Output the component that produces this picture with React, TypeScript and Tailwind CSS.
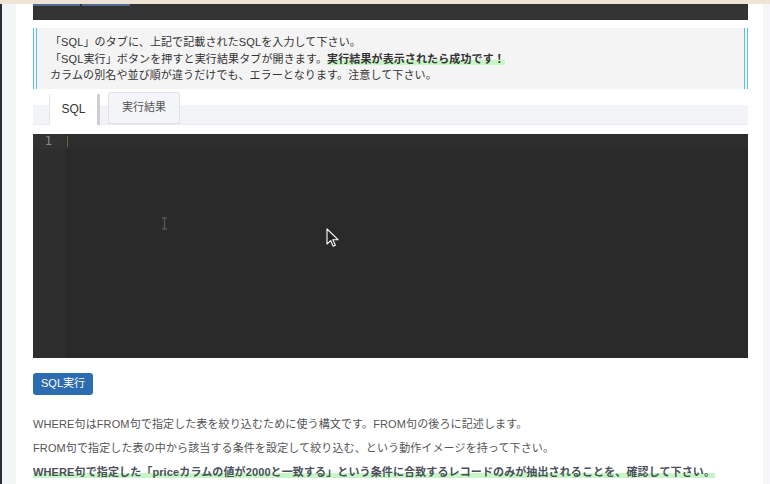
import React from "react";

const font = { fontFamily: '"Liberation Sans", "Noto Sans CJK JP", sans-serif' };

function Mark({ children }: { children: React.ReactNode }) {
  return <strong className="font-bold bg-[linear-gradient(transparent_62%,#c6f6c6_62%)]">{children}</strong>;
}

export default function App() {
  return (
    <div className="w-[770px] h-[484px] overflow-hidden bg-[#ede4d6] pt-[4px]" style={font}>
      <div className="flex h-full">
        <div className="w-[2px] bg-[#2b2c3a]" />
        <div className="w-[14px] bg-[#f4f5f7]" />
        <main className="w-[747px] bg-white pl-[17px] pr-[15px]">
          <div className="h-[16px] bg-[#333333] flex gap-[2px]">
            <div className="w-[47px] h-[2px] bg-[#4f6b95]" />
            <div className="w-[48px] h-[2px] bg-[#4f6b95]" />
          </div>

          <div className="mt-[8px] border-x-4 border-double border-[#5cc3cb] bg-[#f4f4f4] pl-[13px] pt-[6px] pb-[5px] text-[11px] leading-[16.5px] tracking-[0.12px] text-[#333]">
            <p>「SQL」のタブに、上記で記載されたSQLを入力して下さい。</p>
            <p>「SQL実行」ボタンを押すと実行結果タブが開きます。<Mark>実行結果が表示されたら成功です！</Mark></p>
            <p>カラムの別名や並び順が違うだけでも、エラーとなります。注意して下さい。</p>
          </div>

          <div className="mt-[3px] h-[33px] flex items-start pl-[16px] border-b border-[#e8eaee] bg-[linear-gradient(to_bottom,transparent_13px,#f2f4f8_13px)]">
            <div className="mt-[2px] w-[51px] h-[31px] bg-white border-l border-[#e4e4e4] border-r-[3px] border-r-[#cfcfcf] flex items-center justify-center text-[12px] text-[#333]">
              SQL
            </div>
            <div className="ml-[8px] w-[72px] h-[32px] rounded-t-[3px] border border-[#dfe1e5] bg-[#f4f5f8] flex items-center justify-center text-[11px] text-[#555]">
              実行結果
            </div>
          </div>

          <div className="relative mt-[9px] h-[224px] bg-[#2a2a2a] flex">
            <div className="w-[32px] bg-[#2e2e2e] flex flex-col">
              <div className="h-[15px] bg-[#323232] text-right pr-[13px] text-[12px] leading-[15px] text-[#8c8c8c]" style={{ fontFamily: '"DejaVu Sans Mono", monospace' }}>1</div>
            </div>
            <div className="flex-1">
              <div className="h-[15px] bg-[#2d2d2d] pl-[2px] pt-[2px]">
                <div className="w-px h-[11px] bg-[#6b6b3a]" />
              </div>
            </div>
            <svg className="absolute left-[128px] top-[83px]" width="7" height="13" viewBox="0 0 7 13">
              <path d="M1 1h5M3.5 1v11M1 12h5" stroke="#555" strokeWidth="1.4" fill="none" />
            </svg>
            <svg className="absolute left-[293px] top-[94px]" width="13" height="19" viewBox="0 0 13 19">
              <path d="M1 1v15l3.6-3.4 2.6 5.6 2.2-1-2.6-5.5H12z" fill="#222" stroke="#fff" strokeWidth="1.1" strokeLinejoin="round" />
            </svg>
          </div>

          <button className="mt-[15px] h-[22px] w-[60px] rounded-[3px] bg-[#2d6cb1] text-[11px] text-white">
            SQL実行
          </button>

          <div className="mt-[21px] text-[11px] leading-[16px] tracking-[0.12px] text-[#555]">
            <p className="mb-[8px]">WHERE句はFROM句で指定した表を絞り込むために使う構文です。FROM句の後ろに記述します。</p>
            <p className="mb-[8px]">FROM句で指定した表の中から該当する条件を設定して絞り込む、という動作イメージを持って下さい。</p>
            <p className="text-[#4a4f5a]"><Mark>WHERE句で指定した「priceカラムの値が2000と一致する」という条件に合致するレコードのみが抽出されることを、確認して下さい。</Mark></p>
          </div>
        </main>
        <div className="flex-1 bg-[#f6f6f8]" />
      </div>
    </div>
  );
}
